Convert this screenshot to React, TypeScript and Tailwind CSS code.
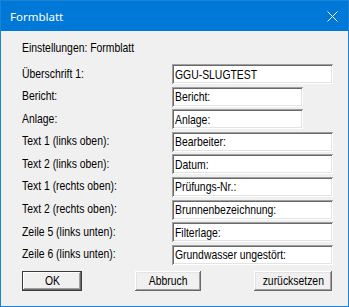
import { FC, ReactNode } from "react";

type Row = { label: string; value: string; wide: boolean };

const rows: Row[] = [
  { label: "Überschrift 1:", value: "GGU-SLUGTEST", wide: true },
  { label: "Bericht:", value: "Bericht:", wide: false },
  { label: "Anlage:", value: "Anlage:", wide: false },
  { label: "Text 1 (links oben):", value: "Bearbeiter:", wide: true },
  { label: "Text 2 (links oben):", value: "Datum:", wide: true },
  { label: "Text 1 (rechts oben):", value: "Prüfungs-Nr.:", wide: true },
  { label: "Text 2 (rechts oben):", value: "Brunnenbezeichnung:", wide: true },
  { label: "Zeile 5 (links unten):", value: "Filterlage:", wide: true },
  { label: "Zeile 6 (links unten):", value: "Grundwasser ungestört:", wide: true },
];

// the dialog font is a narrow sans; squeeze Liberation Sans to its width
const Narrow: FC<{ children: ReactNode; center?: boolean }> = ({ children, center }) => (
  <span
    className={`inline-block whitespace-nowrap scale-x-[0.8] ${center ? "origin-center" : "origin-left"}`}
  >
    {children}
  </span>
);

const sunken =
  "h-[20px] bg-white pl-[3px] flex items-center shadow-[inset_1px_1px_#a0a0a0,inset_-1px_-1px_#ffffff,inset_2px_2px_#696969,inset_-2px_-2px_#e3e3e3]";

const raised =
  "h-[20px] flex items-center justify-center bg-[#f0f0f0] shadow-[inset_-1px_-1px_#696969,inset_1px_1px_#ffffff,inset_-2px_-2px_#a0a0a0,inset_2px_2px_#e3e3e3]";

const App: FC = () => {
  return (
    <div className="flex h-[307px] w-[349px] flex-col border border-[#1883d7] bg-[#f0f0f0] font-['Liberation_Sans',Arial,sans-serif] text-[13px] leading-[15px] text-black">
      {/* title bar */}
      <div className="flex h-[30px] items-center justify-between bg-[#0078d7] pl-[9px] pr-[10px]">
        <span className="font-['Noto_Sans',sans-serif] text-[11.5px] text-white">Formblatt</span>
        <svg width="11" height="11" viewBox="0 0 11 11">
          <path d="M0.5 0.5 L10.5 10.5 M10.5 0.5 L0.5 10.5" stroke="#ffffff" strokeWidth="1" />
        </svg>
      </div>

      {/* body */}
      <div className="flex flex-1 flex-col pl-[21px] pr-[15px] pt-[9px]">
        <div className="h-[15px]">
          <Narrow>Einstellungen: Formblatt</Narrow>
        </div>

        <div className="mt-[9px] flex flex-col gap-[2.6px]">
          {rows.map((row, index) => (
            <div className="flex items-center" key={index}>
              <span className="-mt-[2px] w-[150px]">
                <Narrow>{row.label}</Narrow>
              </span>
              <div className={`${sunken} ${row.wide ? "w-[161px]" : "w-[131px]"}`}>
                <Narrow>{row.value}</Narrow>
              </div>
            </div>
          ))}
        </div>

        {/* buttons */}
        <div className="mt-[6px] flex justify-between pr-[1px]">
          <button className={`${raised} w-[60px] outline outline-1 -outline-offset-1 outline-[#3c3c3c] shadow-[inset_-2px_-2px_#696969,inset_2px_2px_#ffffff,inset_-3px_-3px_#a0a0a0]`}>
            <Narrow center>OK</Narrow>
          </button>
          <button className={`${raised} w-[66px]`}>
            <Narrow center>Abbruch</Narrow>
          </button>
          <button className={`${raised} w-[78px]`}>
            <Narrow center>zurücksetzen</Narrow>
          </button>
        </div>
      </div>
    </div>
  );
};

export default App;
